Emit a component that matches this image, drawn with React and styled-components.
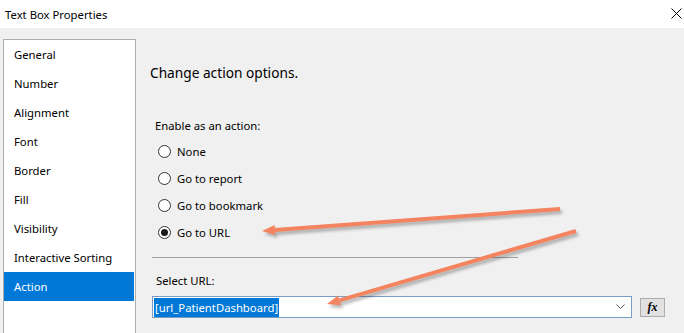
import React from 'react';
import styled, { createGlobalStyle } from 'styled-components';

const GlobalStyle = createGlobalStyle`
    html, body {
        margin: 0;
        padding: 0;
        background: #f0f0f0;
    }
    body {
        font-family: "Segoe UI", "Noto Sans", "Open Sans", sans-serif;
        font-size: 11.3px;
        color: #000;
    }
    * {
        box-sizing: border-box;
    }
`;

const Window = styled.div`
    position: relative;
    width: 684px;
    height: 333px;
    overflow: hidden;
    background: #f0f0f0;
`;

const TitleBar = styled.div`
    height: 28px;
    background: #fff;
    display: flex;
    align-items: center;
    justify-content: space-between;
    padding: 0 2px 0 5px;
`;

const CloseButton = styled.div`
    width: 11px;
    height: 11px;
    display: flex;
    margin-top: -2px;
`;

const Body = styled.div`
    display: flex;
    padding: 11px 0 0 3px;
    height: 305px;
`;

const NavList = styled.ul`
    list-style: none;
    margin: 0;
    padding: 0;
    width: 133px;
    height: 100%;
    background: #fff;
    border: 1px solid #adadad;
    border-bottom: none;
`;

const NavItem = styled.li`
    height: 29px;
    display: flex;
    align-items: center;
    padding-left: 10px;
    margin-right: 1px;
    background: ${(p) => (p.selected ? '#0078d7' : 'transparent')};
    color: ${(p) => (p.selected ? '#fff' : '#000')};
`;

const Content = styled.div`
    flex: 1;
    padding: 24px 0 0 14px;
`;

const Heading = styled.div`
    font-size: 13.7px;
    line-height: 20px;
`;

const Group = styled.div`
    padding: 35px 0 0 5px;
`;

const Label = styled.div`
    line-height: 16px;
    margin-bottom: ${(p) => p.gap}px;
`;

const RadioRow = styled.label`
    display: flex;
    align-items: center;
    height: 27px;
    padding-left: 3px;
    gap: 6px;
`;

const RadioCircle = styled.span`
    width: 13px;
    height: 13px;
    border: 1px solid #333;
    border-radius: 50%;
    background: #fff;
    display: flex;
    align-items: center;
    justify-content: center;
    &::after {
        content: '';
        width: 7px;
        height: 7px;
        border-radius: 50%;
        background: ${(p) => (p.checked ? '#1a1a1a' : 'transparent')};
    }
`;

const Separator = styled.div`
    width: 366px;
    height: 1px;
    background: #a0a0a0;
    margin: 11px 0 0 2px;
`;

const UrlSection = styled.div`
    padding: 15px 0 0 6px;
`;

const ComboRow = styled.div`
    display: flex;
    align-items: center;
    gap: 8px;
    margin-left: -4px;
`;

const Combo = styled.div`
    width: 480px;
    height: 22px;
    border: 1px solid #7a9cc6;
    background: #fff;
    display: flex;
    align-items: center;
    justify-content: space-between;
    padding-right: 6px;
`;

const Selected = styled.span`
    background: #0078d7;
    color: #fff;
    margin-left: 1px;
    padding: 0 1px;
    height: 19px;
    line-height: 19px;
`;

const FxButton = styled.div`
    width: 25px;
    height: 19px;
    border: 1px solid #adadad;
    background: #e1e1e1;
    display: flex;
    align-items: center;
    justify-content: center;
    font-family: "Liberation Serif", serif;
    font-style: italic;
    font-weight: bold;
    font-size: 12px;
`;

const Overlay = styled.svg`
    position: absolute;
    left: 0;
    top: 0;
    pointer-events: none;
`;

const navItems = [
    'General', 'Number', 'Alignment', 'Font', 'Border',
    'Fill', 'Visibility', 'Interactive Sorting', 'Action',
];

const options = ['None', 'Go to report', 'Go to bookmark', 'Go to URL'];

const Arrow = ({ x1, y1, x2, y2 }) => {
    const a = Math.atan2(y2 - y1, x2 - x1);
    const len = 13;
    const w = 5;
    const bx = x2 - len * Math.cos(a);
    const by = y2 - len * Math.sin(a);
    const px = -Math.sin(a) * w;
    const py = Math.cos(a) * w;
    const head = `${x2},${y2} ${bx + px},${by + py} ${bx - px},${by - py}`;
    return (
        <g>
            <g transform="translate(2,3)" opacity="0.35" filter="url(#blur)">
                <line x1={x1} y1={y1} x2={bx} y2={by} stroke="#333" strokeWidth="4" />
                <polygon points={head} fill="#333" />
            </g>
            <line x1={x1} y1={y1} x2={bx} y2={by} stroke="#f4845f" strokeWidth="4" />
            <polygon points={head} fill="#f4845f" />
        </g>
    );
};

const App = () => (
    <Window>
        <GlobalStyle />
        <TitleBar>
            <span>Text Box Properties</span>
            <CloseButton>
                <svg width="11" height="11" viewBox="0 0 11 11">
                    <path d="M0.5 0.5 L10.5 10.5 M10.5 0.5 L0.5 10.5" stroke="#000" strokeWidth="1" />
                </svg>
            </CloseButton>
        </TitleBar>
        <Body>
            <NavList>
                {navItems.map((item) => (
                    <NavItem key={item} selected={item === 'Action'}>{item}</NavItem>
                ))}
            </NavList>
            <Content>
                <Heading>Change action options.</Heading>
                <Group>
                    <Label gap={4}>Enable as an action:</Label>
                    {options.map((opt) => (
                        <RadioRow key={opt}>
                            <RadioCircle checked={opt === 'Go to URL'} />
                            {opt}
                        </RadioRow>
                    ))}
                </Group>
                <Separator />
                <UrlSection>
                    <Label gap={7}>Select URL:</Label>
                    <ComboRow>
                        <Combo>
                            <Selected>[url_PatientDashboard]</Selected>
                            <svg width="9" height="6" viewBox="0 0 9 6">
                                <path d="M0.5 0.5 L4.5 4.5 L8.5 0.5" stroke="#555" fill="none" />
                            </svg>
                        </Combo>
                        <FxButton>fx</FxButton>
                    </ComboRow>
                </UrlSection>
            </Content>
        </Body>
        <Overlay width="684" height="333">
            <defs>
                <filter id="blur" x="-10%" y="-50%" width="120%" height="200%">
                    <feGaussianBlur stdDeviation="1.5" />
                </filter>
            </defs>
            <Arrow x1={560} y1={209} x2={262} y2={231} />
            <Arrow x1={576} y1={231} x2={327} y2={304} />
        </Overlay>
    </Window>
);

export default App;
